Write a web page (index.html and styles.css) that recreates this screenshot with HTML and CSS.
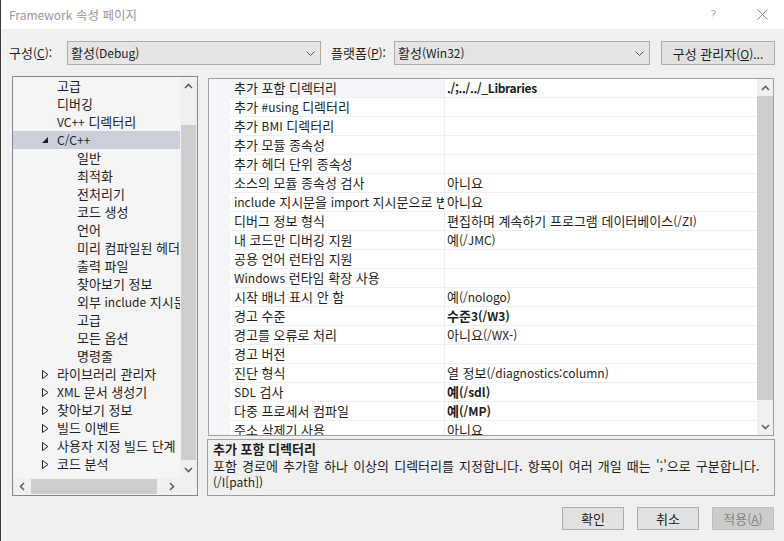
FILE: index.html
```html
<!DOCTYPE html>
<html lang="ko">
<head>
<meta charset="utf-8">
<title>Framework 속성 페이지</title>
<link rel="stylesheet" href="styles.css">
</head>
<body>
<div class="window">
  <div class="titlebar">
    <span class="title"><span class="en">Framework</span> 속성 페이지</span>
    <span class="help">?</span>
    <svg class="close" width="11" height="11" viewBox="0 0 11 11"><path d="M0.5 0.5 L10.5 10.5 M10.5 0.5 L0.5 10.5" stroke="#8c8c8c" stroke-width="1" fill="none"/></svg>
  </div>

  <div class="config">
    <span class="lbl lbl-config">구성<span class="en">(<u>C</u>):</span></span>
    <div class="combo combo-config"><span>활성<span class="en">(Debug)</span></span>
      <svg width="9" height="5" viewBox="0 0 9 5"><path d="M0.5 0.5 L4.5 4.5 L8.5 0.5" stroke="#555" stroke-width="1" fill="none"/></svg></div>
    <span class="lbl lbl-platform">플랫폼<span class="en">(<u>P</u>):</span></span>
    <div class="combo combo-platform"><span>활성<span class="en">(Win32)</span></span>
      <svg width="9" height="5" viewBox="0 0 9 5"><path d="M0.5 0.5 L4.5 4.5 L8.5 0.5" stroke="#555" stroke-width="1" fill="none"/></svg></div>
    <button class="btn btn-manager">구성 관리자<span class="en">(<u>O</u>)...</span></button>
  </div>

  <div class="main">
    <div class="tree">
      <div class="tree-content">
        <div class="node leaf">고급</div>
        <div class="node leaf">디버깅</div>
        <div class="node leaf"><span class="en">VC++</span>&nbsp;디렉터리</div>
        <div class="node branch selected"><span class="twisty"><svg width="6" height="6" viewBox="0 0 6 6"><path d="M6 0 L6 6 L0 6 Z" fill="#1e1e1e"/></svg></span><span class="en">C/C++</span></div>
        <div class="node sub">일반</div>
        <div class="node sub">최적화</div>
        <div class="node sub">전처리기</div>
        <div class="node sub">코드 생성</div>
        <div class="node sub">언어</div>
        <div class="node sub">미리 컴파일된 헤더</div>
        <div class="node sub">출력 파일</div>
        <div class="node sub">찾아보기 정보</div>
        <div class="node sub">외부&nbsp;<span class="en">include</span>&nbsp;지시문</div>
        <div class="node sub">고급</div>
        <div class="node sub">모든 옵션</div>
        <div class="node sub">명령줄</div>
        <div class="node branch"><span class="twisty"><svg width="7" height="9" viewBox="0 0 7 9"><path d="M0.5 0.5 L6 4.5 L0.5 8.5 Z" stroke="#1e1e1e" stroke-width="1" fill="none"/></svg></span>라이브러리 관리자</div>
        <div class="node branch"><span class="twisty"><svg width="7" height="9" viewBox="0 0 7 9"><path d="M0.5 0.5 L6 4.5 L0.5 8.5 Z" stroke="#1e1e1e" stroke-width="1" fill="none"/></svg></span><span class="en">XML</span>&nbsp;문서 생성기</div>
        <div class="node branch"><span class="twisty"><svg width="7" height="9" viewBox="0 0 7 9"><path d="M0.5 0.5 L6 4.5 L0.5 8.5 Z" stroke="#1e1e1e" stroke-width="1" fill="none"/></svg></span>찾아보기 정보</div>
        <div class="node branch"><span class="twisty"><svg width="7" height="9" viewBox="0 0 7 9"><path d="M0.5 0.5 L6 4.5 L0.5 8.5 Z" stroke="#1e1e1e" stroke-width="1" fill="none"/></svg></span>빌드 이벤트</div>
        <div class="node branch"><span class="twisty"><svg width="7" height="9" viewBox="0 0 7 9"><path d="M0.5 0.5 L6 4.5 L0.5 8.5 Z" stroke="#1e1e1e" stroke-width="1" fill="none"/></svg></span>사용자 지정 빌드 단계</div>
        <div class="node branch"><span class="twisty"><svg width="7" height="9" viewBox="0 0 7 9"><path d="M0.5 0.5 L6 4.5 L0.5 8.5 Z" stroke="#1e1e1e" stroke-width="1" fill="none"/></svg></span>코드 분석</div>
      </div>
      <div class="vscroll">
        <div class="sarrow"><svg width="9" height="6" viewBox="0 0 9 6"><path d="M1 5 L4.5 1.5 L8 5" stroke="#606060" stroke-width="1.6" fill="none"/></svg></div>
        <div class="vtrack tree-vtrack"><div class="thumb"></div></div>
        <div class="sarrow"><svg width="9" height="6" viewBox="0 0 9 6"><path d="M1 1 L4.5 4.5 L8 1" stroke="#606060" stroke-width="1.6" fill="none"/></svg></div>
      </div>
      <div class="hscroll">
        <div class="sarrow"><svg width="6" height="9" viewBox="0 0 6 9"><path d="M5 1 L1.5 4.5 L5 8" stroke="#606060" stroke-width="1.6" fill="none"/></svg></div>
        <div class="htrack"><div class="thumb"></div></div>
        <div class="sarrow"><svg width="6" height="9" viewBox="0 0 6 9"><path d="M1 1 L4.5 4.5 L1 8" stroke="#606060" stroke-width="1.6" fill="none"/></svg></div>
      </div>
      <div class="corner"></div>
    </div>

    <div class="right">
      <div class="grid">
        <div class="rows">
          <div class="prow selected"><div class="pname">추가 포함 디렉터리</div><div class="pval bold"><span class="en path">./;../../_Libraries</span></div></div>
          <div class="prow"><div class="pname">추가&nbsp;<span class="en">#using</span>&nbsp;디렉터리</div><div class="pval"></div></div>
          <div class="prow"><div class="pname">추가&nbsp;<span class="en">BMI</span>&nbsp;디렉터리</div><div class="pval"></div></div>
          <div class="prow"><div class="pname">추가 모듈 종속성</div><div class="pval"></div></div>
          <div class="prow"><div class="pname">추가 헤더 단위 종속성</div><div class="pval"></div></div>
          <div class="prow"><div class="pname">소스의 모듈 종속성 검사</div><div class="pval">아니요</div></div>
          <div class="prow"><div class="pname"><span class="en">include</span>&nbsp;지시문을&nbsp;<span class="en">import</span>&nbsp;지시문으로 변환</div><div class="pval">아니요</div></div>
          <div class="prow"><div class="pname">디버그 정보 형식</div><div class="pval">편집하며 계속하기 프로그램 데이터베이스<span class="en">(/ZI)</span></div></div>
          <div class="prow"><div class="pname">내 코드만 디버깅 지원</div><div class="pval">예<span class="en">(/JMC)</span></div></div>
          <div class="prow"><div class="pname">공용 언어 런타임 지원</div><div class="pval"></div></div>
          <div class="prow"><div class="pname"><span class="en">Windows</span>&nbsp;런타임 확장 사용</div><div class="pval"></div></div>
          <div class="prow"><div class="pname">시작 배너 표시 안 함</div><div class="pval">예<span class="en">(/nologo)</span></div></div>
          <div class="prow"><div class="pname">경고 수준</div><div class="pval bold">수준<span class="en">3(/W3)</span></div></div>
          <div class="prow"><div class="pname">경고를 오류로 처리</div><div class="pval">아니요<span class="en">(/WX-)</span></div></div>
          <div class="prow"><div class="pname">경고 버전</div><div class="pval"></div></div>
          <div class="prow"><div class="pname">진단 형식</div><div class="pval">열 정보<span class="en">(/diagnostics:column)</span></div></div>
          <div class="prow"><div class="pname"><span class="en">SDL</span>&nbsp;검사</div><div class="pval bold">예<span class="en">(/sdl)</span></div></div>
          <div class="prow"><div class="pname">다중 프로세서 컴파일</div><div class="pval bold">예<span class="en">(/MP)</span></div></div>
          <div class="prow"><div class="pname">주소 삭제기 사용</div><div class="pval">아니요</div></div>
        </div>
        <div class="vscroll grid-vscroll">
          <div class="sarrow"><svg width="9" height="6" viewBox="0 0 9 6"><path d="M1 5 L4.5 1.5 L8 5" stroke="#606060" stroke-width="1.6" fill="none"/></svg></div>
          <div class="vtrack grid-vtrack"><div class="thumb"></div></div>
          <div class="sarrow"><svg width="9" height="6" viewBox="0 0 9 6"><path d="M1 1 L4.5 4.5 L8 1" stroke="#606060" stroke-width="1.6" fill="none"/></svg></div>
        </div>
      </div>
      <div class="desc">
        <div class="desc-title">추가 포함 디렉터리</div>
        <div class="desc-text">포함 경로에 추가할 하나 이상의 디렉터리를 지정합니다. 항목이 여러 개일 때는 ';'으로 구분합니다.<br><span class="en">(/I[path])</span></div>
      </div>
    </div>
  </div>

  <div class="footer">
    <button class="btn">확인</button>
    <button class="btn">취소</button>
    <button class="btn disabled">적용<span class="en">(<u>A</u>)</span></button>
  </div>
</div>
</body>
</html>
```
FILE: styles.css
```css
* { box-sizing: border-box; }
html, body { margin: 0; padding: 0; }
body {
  width: 784px;
  height: 541px;
  overflow: hidden;
  background: #f0f0f0;
  font-family: "Noto Sans CJK KR", "Noto Sans", sans-serif;
  font-size: 13px;
  color: #1e1e1e;
}
.en { font-size: 12px; }
.window {
  width: 784px;
  height: 541px;
  border-left: 1px solid #3a3a3a;
  background: #f0f0f0;
  display: flex;
  flex-direction: column;
}

/* title bar */
.titlebar {
  height: 29px;
  background: #ffffff;
  display: flex;
  align-items: center;
  padding-left: 8px;
  flex-shrink: 0;
}
.title { color: #999999; font-size: 12.5px; line-height: 29px; }
.help {
  margin-left: auto;
  color: #8c8c8c;
  font-family: "DejaVu Sans", sans-serif;
  font-size: 13px;
  font-weight: 300;
  width: 10px;
}
.close { margin-left: 37px; margin-right: 16px; }

/* config row */
.config {
  margin-top: 12px;
  height: 24px;
  display: flex;
  align-items: center;
  padding-left: 8px;
  flex-shrink: 0;
}
.lbl { line-height: 24px; white-space: nowrap; }
.lbl-config { width: 58px; }
.lbl-platform { width: 63px; margin-left: 10px; }
.combo {
  height: 24px;
  border: 1px solid #acacac;
  background: #e5e5e5;
  display: flex;
  align-items: center;
  justify-content: space-between;
  padding: 0 5px 0 3px;
  line-height: 22px;
}
.combo-config { width: 254px; }
.combo-platform { width: 256px; }
.btn {
  font-family: inherit;
  font-size: 13px;
  color: #1e1e1e;
  height: 23px;
  width: 62px;
  border: 1px solid #adadad;
  background: #e1e1e1;
  padding: 0;
  line-height: 21px;
  text-align: center;
}
.btn-manager { width: 114px; height: 24px; margin-left: 11px; }
.btn.disabled { background: #cccccc; border-color: #bfbfbf; color: #838383; }

/* main */
.main {
  margin-top: 11px;
  display: flex;
  padding-left: 11px;
  height: 420px;
  flex-shrink: 0;
}
.tree {
  width: 186px;
  height: 420px;
  border: 1px solid #828790;
  background: #f5f5f5;
  display: grid;
  grid-template-columns: 167px 17px;
  grid-template-rows: 401px 17px;
}
.tree-content { overflow: hidden; }
.node {
  height: 18px;
  line-height: 18px;
  white-space: nowrap;
  overflow: hidden;
  display: flex;
  align-items: center;
}
.leaf { padding-left: 44px; }
.sub { padding-left: 64px; }
.branch { padding-left: 29px; }
.twisty { width: 15px; flex-shrink: 0; display: inline-flex; align-items: center; }
.node.selected { background: #cccedb; }

.vscroll {
  background: #f0f0f0;
  display: flex;
  flex-direction: column;
}
.sarrow {
  width: 17px;
  height: 17px;
  display: flex;
  align-items: center;
  justify-content: center;
  flex-shrink: 0;
}
.vtrack { flex: 1; display: flex; flex-direction: column; }
.vtrack .thumb { flex: 1; background: #cdcdcd; margin: 0 1px; }
.tree-vtrack { padding: 31px 0 1px; }
.hscroll {
  background: #f0f0f0;
  display: flex;
}
.htrack { flex: 1; display: flex; padding: 1px 6px 1px 1px; }
.htrack .thumb { flex: 1; background: #cdcdcd; }
.corner { background: #f0f0f0; }

.right {
  margin-left: 10px;
  width: 566px;
  display: flex;
  flex-direction: column;
}
.grid {
  margin-top: 2px;
  height: 358px;
  border: 1px solid #a0a0a0;
  background: #f5f6fa;
  display: flex;
}
.rows {
  width: 548px;
  padding-left: 21px;
  overflow: hidden;
  background: #f5f6fa;
}
.prow {
  height: 19px;
  display: grid;
  grid-template-columns: 214px 313px;
  background: #ffffff;
  border-bottom: 1px solid #eeeff3;
}
.pname, .pval {
  line-height: 18px;
  white-space: nowrap;
  overflow: hidden;
}
.pname { padding-left: 4px; }
.pval { border-left: 1px solid #eeeff3; padding-left: 2px; }
.prow.selected .pname { background: #f5f6fa; }
.bold { font-weight: 700; }
.path { letter-spacing: -0.35px; }
.grid-vscroll { width: 16px; }
.grid-vscroll .sarrow { width: 16px; }
.grid-vtrack { padding: 0 0 18px; }
.grid-vtrack .thumb { margin: 0; }

.desc {
  margin-top: 3px;
  margin-left: -1px;
  width: 568px;
  height: 58px;
  border: 1px solid #a0a0a0;
  background: #f0f0f0;
  padding: 0 5px;
}
.desc-title { font-weight: 700; line-height: 18px; }
.desc-text { line-height: 16px; white-space: nowrap; word-spacing: 1.5px; }

/* footer */
.footer {
  margin-top: 11px;
  display: flex;
  justify-content: flex-end;
  gap: 13px;
  padding-right: 10px;
}
```
